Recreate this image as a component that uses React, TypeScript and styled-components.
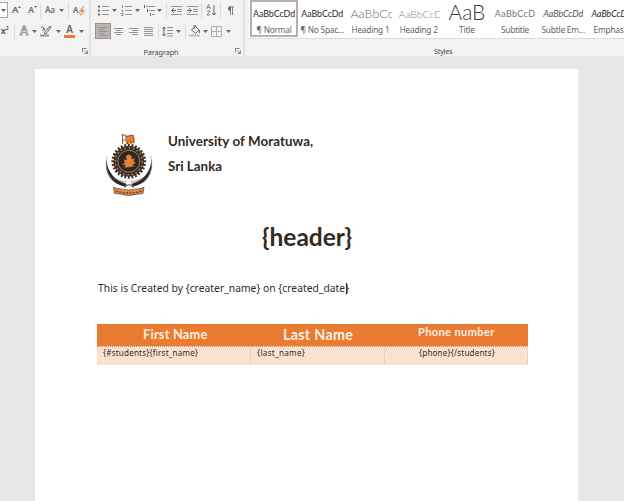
import React from "react";
import styled, { createGlobalStyle } from "styled-components";

const GlobalStyle = createGlobalStyle`
  * { box-sizing: border-box; }
  body { margin: 0; background: #e5e7e6; overflow: hidden; }
  svg { flex: none; }
`;

const ui = `"Noto Sans", "Open Sans", sans-serif`;
const doc = `Lato, "Noto Sans", sans-serif`;

const Window = styled.div`
  width: 624px;
  height: 501px;
  overflow: hidden;
  background: #e5e7e6;
`;

const Ribbon = styled.header`
  display: flex;
  height: 56px;
  background: #f3f3f3;
  font-family: ${ui};
  color: #4c4641;
`;

const Group = styled.section<{ $w: number }>`
  flex: none;
  width: ${(p) => p.$w}px;
  height: 56px;
  border-right: 2px solid #e3e3e2;
`;

const ToolRow = styled.div<{ $h: number }>`
  display: flex;
  align-items: center;
  height: ${(p) => p.$h}px;
`;

const Cell = styled.div<{ $w: number }>`
  flex: none;
  width: ${(p) => p.$w}px;
  display: flex;
  align-items: center;
  justify-content: center;
`;

const SelectedCell = styled(Cell)`
  height: 16px;
  background: #bab5b2;
  border: 1px solid #99928d;
`;

const Divider = styled.i`
  flex: none;
  width: 1px;
  height: 15px;
  background: #dddbda;
`;

const ComboEnd = styled(Cell)`
  height: 16px;
  background: #fff;
  border: 1px solid #aaa6a2;
  border-left: 0;
`;

const StylesGroup = styled.section`
  flex: 1;
  min-width: 0;
  padding-left: 4px;
`;

const Gallery = styled.div`
  display: flex;
  height: 39px;
  padding-left: 1px;
  background: #fff;
  border-bottom: 1px solid #dddbd9;
  overflow: hidden;
`;

const StyleTile = styled.div<{ $on?: boolean }>`
  flex: none;
  width: 48.2px;
  height: 37px;
  border: 2px solid ${(p) => (p.$on ? "#b5b0ad" : "transparent")};
  overflow: hidden;
  text-align: center;
`;

const Sample = styled.div<{ $size: number; $color: string; $gap: number; $italic?: boolean; $clip?: boolean; $weight?: number; $up?: number }>`
  display: flex;
  justify-content: ${(p) => (p.$clip ? "flex-start" : "center")};
  height: 22px;
  margin: 0 1px;
  padding-left: ${(p) => (p.$clip ? 1 : 0)}px;
  line-height: 24px;
  white-space: nowrap;
  overflow: hidden;
  font-family: ${doc};
  font-size: ${(p) => p.$size}px;
  font-weight: ${(p) => p.$weight || 400};
  font-style: ${(p) => (p.$italic ? "italic" : "normal")};
  letter-spacing: ${(p) => p.$gap}px;
  color: ${(p) => p.$color};

  & > span { margin-top: ${(p) => p.$up || 0}px; }
`;

const TileLabel = styled.div`
  font-size: 8.3px;
  line-height: 12px;
  letter-spacing: -0.2px;
  white-space: nowrap;
  color: #68625e;
`;

const StylesFoot = styled.footer`
  height: 17px;
  padding: 6px 0 0 185px;
  font-size: 7.3px;
  line-height: 12px;
  letter-spacing: -0.25px;
`;

const FootText = styled.span`
  margin-top: 2px;
  font-size: 7.3px;
  line-height: 12px;
  letter-spacing: -0.1px;
`;

const Canvas = styled.main`
  padding: 13px 0 0 35px;
`;

const Page = styled.article`
  width: 544px;
  height: 432px;
  padding: 63px 50px 0 62px;
  background: #fff;
  border-right: 1px solid #eef0ef;
  font-family: ${doc};
  color: #352a22;
`;

const Letterhead = styled.div`
  display: flex;
  height: 66px;
  padding-left: 7px;
`;

const Institution = styled.div`
  margin-top: -3px;
  padding-left: 14px;
  font-size: 13.4px;
  font-weight: 700;
  line-height: 25px;
  white-space: nowrap;
`;

const NameLine = styled.div<{ $gap: number }>`
  letter-spacing: ${(p) => p.$gap}px;
`;

const Heading = styled.h1`
  margin: 24px 0 0;
  padding-left: 165px;
  height: 30px;
  font-size: 24.5px;
  font-weight: 700;
  line-height: 30px;
  letter-spacing: 0;
`;

const Created = styled.p`
  margin: 28px 0 0;
  padding-left: 1px;
  font-family: "Noto Sans", sans-serif;
  font-size: 10.3px;
  line-height: 16px;
  letter-spacing: 0.02px;
  white-space: nowrap;
`;

const Caret = styled.i`
  display: inline-block;
  width: 1px;
  height: 11px;
  margin-left: -3px;
  vertical-align: -2px;
  background: #352a22;
`;

const Table = styled.div`
  display: grid;
  grid-template-columns: 154px 134px 143px;
  grid-template-rows: 22px 19px;
  width: 431px;
  margin-top: 28px;
`;

const HeadCell = styled.div<{ $size: number; $left: number; $top: number; $gap: number }>`
  padding: ${(p) => p.$top}px 0 0 ${(p) => p.$left}px;
  background: #e97c30;
  color: #fdeee2;
  font-size: ${(p) => p.$size}px;
  font-weight: 700;
  line-height: 16px;
  letter-spacing: ${(p) => p.$gap}px;
  white-space: nowrap;
`;

const BodyCell = styled.div<{ $left: number; $gap: number }>`
  padding: 0 0 0 ${(p) => p.$left}px;
  background: #fae1d0;
  border-top: 1px dotted #c98e67;
  border-right: 1px dotted #dfc3b1;
  font-family: "Noto Sans", sans-serif;
  font-size: 8px;
  line-height: 11px;
  letter-spacing: ${(p) => p.$gap}px;
  white-space: nowrap;
`;

const ink = "#6b6560";
const pale = "#99938f";

const Drop = () => (
  <svg width="5" height="3" viewBox="0 0 5 3"><path d="M0 0h5L2.5 3z" fill={ink} /></svg>
);

const Launcher = () => (
  <svg width="6" height="6" viewBox="0 0 6 6" fill="none" stroke={ink} strokeWidth=".8">
    <path d="M.5 4.5v-4h4M2.3 2.3l3 3M5.4 2.5v3h-3" />
  </svg>
);

const Glyph = ({ children, w = 12, h = 12 }: { children: React.ReactNode; w?: number; h?: number }) => (
  <svg width={w} height={h} viewBox={`0 0 ${w} ${h}`} fill="none" stroke={ink} strokeWidth="1">{children}</svg>
);

const Letter = styled.span<{ $size: number; $weight?: number; $outline?: boolean }>`
  font-size: ${(p) => p.$size}px;
  line-height: 12px;
  letter-spacing: -0.3px;
  font-weight: ${(p) => p.$weight || 600};
  color: ${(p) => (p.$outline ? "#f7f7f7" : "#68625e")};
  -webkit-text-stroke: ${(p) => (p.$outline ? "0.8px #8d8782" : "0")};
`;

const Raised = styled.sup`
  font-size: 5px;
  line-height: 1;
  vertical-align: 4px;
`;

const ColorLetter = styled(Letter)`
  width: 11px;
  height: 13px;
  line-height: 9px;
  text-align: center;
  border-bottom: 3px solid #ed7d31;
`;

const GrowA = ({ down }: { down?: boolean }) => (
  <>
    <Letter $size={down ? 8.5 : 9.5}>A</Letter>
    <Glyph w={3} h={10}><path d={down ? "M0 1h3L1.5 3z" : "M0 3h3L1.5 1z"} fill={ink} stroke="none" /></Glyph>
  </>
);

const Lines = ({ kind }: { kind: "left" | "center" | "right" | "full" }) => {
  const d = {
    left: "M1 1.5h9M1 3.5h6M1 5.5h9M1 7.5h6M1 9.5h9",
    center: "M1 2.5h9M3 4.5h5M1 6.5h9M3 8.5h5",
    right: "M1 2.5h9M4 4.5h6M1 6.5h9M4 8.5h6",
    full: "M1 1.5h9M1 3.5h9M1 5.5h9M1 7.5h9M1 9.5h9",
  }[kind];
  return <Glyph w={11} h={11}><path d={d} stroke={pale} /></Glyph>;
};

const FontGroup = () => (
  <Group $w={91}>
    <ToolRow $h={20}>
      <ComboEnd $w={8}><Drop /></ComboEnd>
      <Cell $w={17}><GrowA /></Cell>
      <Cell $w={15}><GrowA down /></Cell>
      <Divider />
      <Cell $w={18}><Letter $size={8.5} $weight={500}>Aa</Letter></Cell>
      <Cell $w={4}><Drop /></Cell>
      <Cell $w={5} />
      <Divider />
      <Cell $w={20}>
        <Letter $size={8}>A</Letter>
        <Glyph w={7} h={11}>
          <path d="M0 7l4-4 3 3-4 5z" fill="#e9a16f" stroke="none" />
          <path d="M1 6l3 3" stroke="#fff" />
          <path d="M3 4l3-3" stroke={pale} />
        </Glyph>
      </Cell>
    </ToolRow>
    <ToolRow $h={22}>
      <Cell $w={9}><Letter $size={9} $weight={700}>x<Raised>2</Raised></Letter></Cell>
      <Cell $w={5} />
      <Divider />
      <Cell $w={18}><Letter $size={12} $outline>A</Letter></Cell>
      <Cell $w={2}><Drop /></Cell>
      <Cell $w={22}>
        <Glyph w={12} h={12}>
          <path d="M4 8l6-7 1 1-5 7zM1 3c2-3 3 0 2 2s2 0 2-2" />
          <path d="M0 10.5h9" stroke={pale} strokeWidth="2" />
        </Glyph>
      </Cell>
      <Cell $w={2}><Drop /></Cell>
      <Cell $w={21}><ColorLetter $size={10}>A</ColorLetter></Cell>
      <Cell $w={2}><Drop /></Cell>
    </ToolRow>
    <ToolRow $h={17}>
      <Cell $w={81} />
      <Cell $w={8}><Launcher /></Cell>
    </ToolRow>
  </Group>
);

const ParagraphGroup = () => (
  <Group $w={154}>
    <ToolRow $h={20}>
      <Cell $w={5} />
      <Cell $w={14}><Glyph w={11} h={11}><path d="M0 1.5h2M0 5.5h2M0 9.5h2" strokeWidth="2" /><path d="M4 1.5h7M4 5.5h7M4 9.5h7" stroke={pale} /></Glyph></Cell>
      <Cell $w={9}><Drop /></Cell>
      <Cell $w={14}><Glyph w={11} h={11}><path d="M1.5 0v3M.5 5h1v2h1M0 8.5h2v2H0" strokeWidth=".7" /><path d="M4 1.5h7M4 5.5h7M4 9.5h7" stroke={pale} /></Glyph></Cell>
      <Cell $w={9}><Drop /></Cell>
      <Cell $w={14}><Glyph w={11} h={11}><path d="M.5 0v3M3.5 4v3M6.5 8v3" /><path d="M2 1.5h9M5 5.5h6M8 9.5h3" stroke={pale} /></Glyph></Cell>
      <Cell $w={7}><Drop /></Cell>
      <Cell $w={3} />
      <Divider />
      <Cell $w={19}><Glyph w={11} h={11}><path d="M0 1.5h11M6 4.5h5M6 6.5h5M0 9.5h11" stroke={pale} /><path d="M5 5.5H1M3 3L.7 5.5 3 8" /></Glyph></Cell>
      <Cell $w={12}><Glyph w={11} h={11}><path d="M0 1.5h11M6 4.5h5M6 6.5h5M0 9.5h11" stroke={pale} /><path d="M0 5.5h4M2 3l2.3 2.5L2 8" /></Glyph></Cell>
      <Cell $w={3} />
      <Divider />
      <Cell $w={18}><Glyph w={11} h={12}><path d="M.5 5L2.5.5 4.5 5M1.3 3.5h2.4M1 7h3L1 11h3" strokeWidth=".8" /><path d="M8 1v10M6 9l2 2 2-2" /></Glyph></Cell>
      <Divider />
      <Cell $w={18}><Glyph w={7} h={9}><path d="M3.5 9V1H7M5.5 1v8" strokeWidth=".8" /><path d="M3.5 .5C.5 .5 .5 4.5 3.5 4.5z" fill={ink} strokeWidth=".8" /></Glyph></Cell>
    </ToolRow>
    <ToolRow $h={22}>
      <Cell $w={4} />
      <SelectedCell $w={16}><Lines kind="left" /></SelectedCell>
      <Cell $w={15}><Lines kind="center" /></Cell>
      <Cell $w={14}><Lines kind="right" /></Cell>
      <Cell $w={16}><Lines kind="full" /></Cell>
      <Cell $w={2} />
      <Divider />
      <Cell $w={17}><Glyph w={11} h={11}><path d="M2 1v9M.5 3L2 1l1.5 2M.5 8L2 10l1.5-2" /><path d="M5 1.5h6M5 4.5h6M5 7.5h6M5 10h6" stroke={pale} /></Glyph></Cell>
      <Cell $w={4}><Drop /></Cell>
      <Cell $w={5} />
      <Divider />
      <Cell $w={18}><Glyph w={12} h={12}><path d="M2.5 5l4-3.5L10 5 6.5 8.5zM5 4V1.5c0-2 2-2 2 0" /><path d="M10.5 5v3" /><path d="M0 10.5h11" stroke="#c4bfbc" strokeWidth="2" /></Glyph></Cell>
      <Cell $w={2}><Drop /></Cell>
      <Cell $w={21}><Glyph w={11} h={11}><path d="M.5.5h10v10H.5zM5.5 0v11M0 5.5h11" stroke="#b2adaa" /></Glyph></Cell>
      <Cell $w={2}><Drop /></Cell>
    </ToolRow>
    <ToolRow $h={17}>
      <Cell $w={49} />
      <Cell $w={42}><FootText>Paragraph</FootText></Cell>
      <Cell $w={52} />
      <Cell $w={8}><Launcher /></Cell>
    </ToolRow>
  </Group>
);

const tiles = [
  { label: "¶ Normal", text: "AaBbCcDd", size: 8.9, color: "#302821", gap: -0.08, on: true },
  { label: "¶ No Spac...", text: "AaBbCcDd", size: 8.9, color: "#302821", gap: -0.08 },
  { label: "Heading 1", text: "AaBbCc", size: 12.5, color: "#716b67", gap: 0.05, clip: true },
  { label: "Heading 2", text: "AaBbCcD", size: 10.5, color: "#8b8581", gap: -0.05, clip: true },
  { label: "Title", text: "AaB", size: 21, color: "#3f3833", gap: -0.1, up: -2 },
  { label: "Subtitle", text: "AaBbCcD", size: 8.8, color: "#7b7571", gap: 0.45 },
  { label: "Subtle Em...", text: "AaBbCcDd", size: 8.9, color: "#5c5550", gap: -0.05, italic: true },
  { label: "Emphasis", text: "AaBbCcDd", size: 8.9, color: "#302821", gap: -0.05, italic: true },
];

const teeth = Array.from({ length: 28 }, (_, i) => i * (360 / 28));

const Crest = () => (
  <svg width="50" height="66" viewBox="0 0 50 66">
    <path d="M18.6 2v10M17.5 3h4M18 8h4" fill="none" stroke="#6d6259" />
    <path d="M21 4l9-1v8l-8 1z" fill="#e97c30" />
    <path d="M21 3.5l3 1 2-1.5 4 1M23.5 12V9.5M27 12V9.5M30 5v6.5" fill="none" stroke="#554a42" strokeWidth=".8" />
    <g transform="translate(24.8 29.3)">
      {teeth.map((a) => <rect key={a} x="-1" y="-17.4" width="2" height="4" fill="#3a3029" transform={`rotate(${a})`} />)}
      <circle r="15.3" fill="#3a3029" />
      <circle r="13.5" fill="none" stroke="#e97c30" strokeWidth="1.4" strokeDasharray="1.5 2.7" />
      <circle r="11" fill="#30271f" stroke="#b0a79e" strokeWidth=".7" />
      <path d="M-5-2l3 1-1-4 3-2 3 2v3l3-1-1 3 2 2-3 1-1 3-3-1-3 2v-3l-4-1 3-1z" fill="#e97c30" />
      <path d="M-5 6l3-2 2 2 3-2 3 1M-1-5l2 4-3 2" fill="none" stroke="#d7a27a" strokeWidth=".7" />
    </g>
    <path d="M2.5 27C3 40 11 49 23 52l-2 2.5C8 52 0 42 2.5 27z" fill="#30271f" />
    <path d="M47.5 27C47 40 39 49 27 52l2 2.5C42 52 50 42 47.5 27z" fill="#30271f" />
    <path d="M3.5 24c-3 8-1 20 8 27M46.5 24c3 8 1 20-8 27" fill="none" stroke="#a49b94" strokeWidth=".6" />
    <path d="M10 45.5q6 4 13 4.5M39 45.5q-6 4-12 4.5" fill="none" stroke="#8e857d" strokeWidth="1.3" strokeDasharray="1.5 .8" />
    <path d="M20 55.5l5-3 5 3" fill="none" stroke="#554a42" />
    <path d="M9.5 55.5l4 1q11.500 3 22.500 0l4-1-1 6-5 .5q-9 3-18 0l-5.500-.5z" fill="#e58545" stroke="#61564d" strokeWidth=".8" />
    <path d="M12 59q13 4 26 0" fill="none" stroke="#5b4534" strokeWidth="1.3" strokeDasharray="2 1.4" />
  </svg>
);

export default function App() {
  return (
    <Window>
      <GlobalStyle />
      <Ribbon>
        <FontGroup />
        <ParagraphGroup />
        <StylesGroup>
          <Gallery>
            {tiles.map((t) => (
              <StyleTile key={t.label} $on={t.on}>
                <Sample $size={t.size} $color={t.color} $gap={t.gap} $italic={t.italic} $clip={t.clip} $up={t.up}
                  $weight={t.label === "Title" || t.clip ? 300 : 400}>
                  <span>{t.text}</span>
                </Sample>
                <TileLabel>{t.label}</TileLabel>
              </StyleTile>
            ))}
          </Gallery>
          <StylesFoot>Styles</StylesFoot>
        </StylesGroup>
      </Ribbon>
      <Canvas>
        <Page>
          <Letterhead>
            <Crest />
            <Institution>
              <NameLine $gap={0.05}>University of Moratuwa,</NameLine>
              <NameLine $gap={0}>Sri Lanka</NameLine>
            </Institution>
          </Letterhead>
          <Heading>{"{header}"}</Heading>
          <Created>{"This is Created by {creater_name} on {created_date}"}<Caret /></Created>
          <Table>
            <HeadCell $size={12.8} $left={46} $top={2} $gap={0.2}>First Name</HeadCell>
            <HeadCell $size={14.3} $left={32} $top={3} $gap={0.3}>Last Name</HeadCell>
            <HeadCell $size={11} $left={33} $top={0} $gap={0.4}>Phone number</HeadCell>
            <BodyCell $left={6} $gap={0.23}>{"{#students}{first_name}"}</BodyCell>
            <BodyCell $left={6} $gap={0.35}>{"{last_name}"}</BodyCell>
            <BodyCell $left={34} $gap={0.22}>{"{phone}{/students}"}</BodyCell>
          </Table>
        </Page>
      </Canvas>
    </Window>
  );
}
